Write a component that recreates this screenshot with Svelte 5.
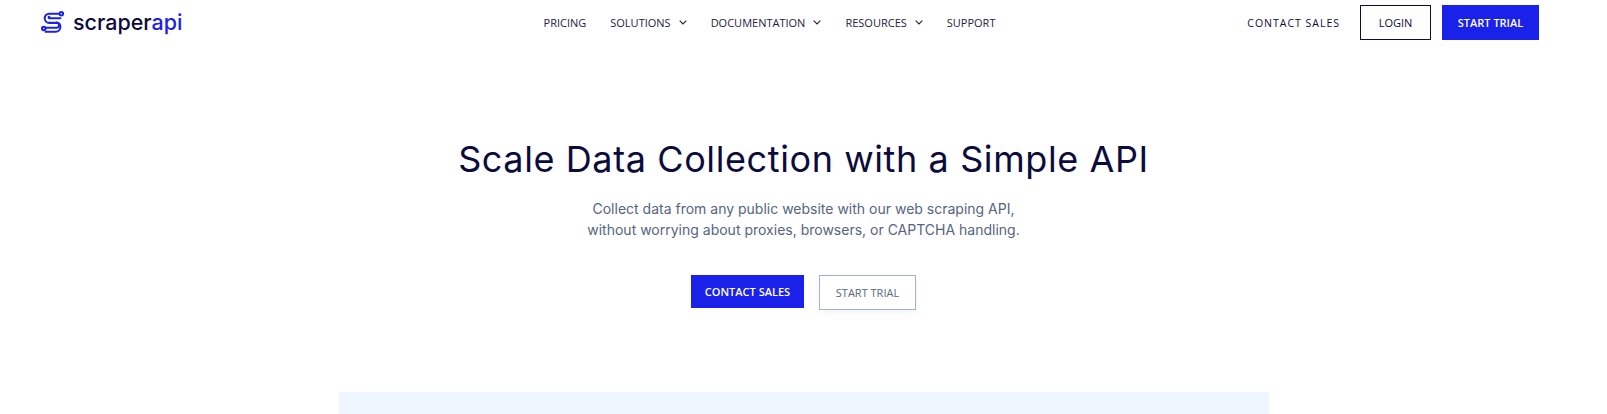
<script>
	const navItems = [
		{ label: 'PRICING', caret: false },
		{ label: 'SOLUTIONS', caret: true },
		{ label: 'DOCUMENTATION', caret: true },
		{ label: 'RESOURCES', caret: true },
		{ label: 'SUPPORT', caret: false }
	];
</script>

<div class="page">
	<header class="topbar">
		<a class="logo" href="#top">
			<svg class="logo-mark" viewBox="0 0 26 26" fill="none" stroke="#1a21e8" stroke-width="2.2" stroke-linecap="round" stroke-linejoin="round">
				<circle cx="22" cy="4.5" r="1.9" />
				<circle cx="3" cy="20.5" r="1.9" />
				<path d="M19.5 4.5H9a5 5 0 0 0 0 10h8a2.6 2.6 0 0 1 0 5.2H6" />
				<path d="M21 9.5H9a.8.8 0 0 1 0-1.600" />
				<path d="M5 24h11a5 5 0 0 0 5-5 5 5 0 0 0-4-5" />
			</svg>
			<span class="logo-text">scraper<span class="logo-accent">api</span></span>
		</a>

		<nav class="nav">
			{#each navItems as item}
				<a class="nav-link" href="#top">
					{item.label}
					{#if item.caret}
						<svg class="caret" viewBox="0 0 8 5" fill="none" stroke="currentColor" stroke-width="1.1">
							<path d="M.7.7 4 4l3.300-3.300" />
						</svg>
					{/if}
				</a>
			{/each}
		</nav>

		<div class="actions">
			<a class="contact" href="#top">CONTACT SALES</a>
			<a class="btn btn-outline-dark" href="#top">LOGIN</a>
			<a class="btn btn-primary" href="#top">START TRIAL</a>
		</div>
	</header>

	<section class="hero">
		<h1>Scale Data Collection with a Simple API</h1>
		<p>
			Collect data from any public website with our web scraping API,<br />
			without worrying about proxies, browsers, or CAPTCHA handling.
		</p>
		<div class="hero-actions">
			<a class="btn btn-primary hero-contact" href="#top">CONTACT SALES</a>
			<a class="btn btn-outline-light" href="#top">START TRIAL</a>
		</div>
	</section>

	<div class="panel"></div>
</div>

<style>
	:global(body) {
		background: #fff;
		overflow: hidden;
	}

	.page {
		height: 414px;
		overflow: hidden;
		font-family: 'Open Sans', 'Noto Sans', sans-serif;
		color: #0c0c3c;
	}

	a {
		text-decoration: none;
		color: inherit;
	}

	.topbar {
		display: grid;
		grid-template-columns: 1fr auto 1fr;
		align-items: center;
		height: 35px;
		padding: 5px 68px 0 41px;
	}

	.logo {
		display: flex;
		align-items: center;
		gap: 8px;
		margin-top: -2px;
	}

	.logo-mark {
		width: 24px;
		height: 25px;
	}

	.logo-text {
		font-family: Inter, sans-serif;
		font-size: 21.500px;
		font-weight: 500;
		letter-spacing: 0;
		color: #0c0c3c;
	}

	.logo-accent {
		color: #1a21e8;
	}

	.nav {
		display: flex;
		align-items: center;
		gap: 24px;
		margin-left: -41px;
	}

	.nav-link {
		display: flex;
		align-items: center;
		gap: 8px;
		font-size: 11px;
		font-weight: 400;
		white-space: nowrap;
		color: #1d2240;
	}

	.caret {
		width: 8px;
		height: 5px;
	}

	.actions {
		display: flex;
		justify-content: flex-end;
		align-items: center;
		gap: 11px;
	}

	.contact {
		font-size: 10.500px;
		letter-spacing: 1px;
		margin-right: 9px;
	}

	.btn {
		display: flex;
		align-items: center;
		justify-content: center;
		box-sizing: border-box;
		height: 35px;
		font-size: 11px;
		white-space: nowrap;
	}

	.btn-primary {
		width: 97px;
		background: #1a21e8;
		color: #fff;
		font-weight: 600;
	}

	.btn-outline-dark {
		width: 71px;
		border: 1px solid #0c0c3c;
	}

	.hero {
		display: flex;
		flex-direction: column;
		align-items: center;
		padding-top: 96px;
	}

	h1 {
		margin: 0;
		font-family: Inter, sans-serif;
		font-size: 36px;
		font-weight: 400;
		line-height: 46px;
		letter-spacing: 0.6px;
		color: #0c0c3c;
	}

	p {
		margin: 16px 0 0;
		font-family: Inter, sans-serif;
		font-size: 14px;
		line-height: 21px;
		text-align: center;
		color: #55657f;
	}

	.hero-actions {
		display: flex;
		gap: 15px;
		margin-top: 35px;
	}

	.hero-contact {
		width: 113px;
		height: 33px;
	}

	.btn-outline-light {
		width: 97px;
		height: 35px;
		border: 1px solid #a3b1c0;
		color: #5a6878;
		box-shadow: 0 2px 6px rgba(90, 104, 120, 0.08);
	}

	.panel {
		width: 930px;
		height: 40px;
		margin: 82px auto 0;
		background: #eef6ff;
	}
</style>
